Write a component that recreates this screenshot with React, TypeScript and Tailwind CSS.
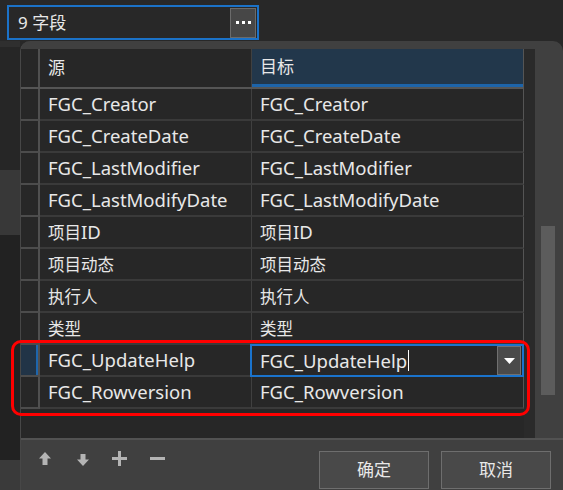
import React from 'react';

const rows = [
  'FGC_Creator',
  'FGC_CreateDate',
  'FGC_LastModifier',
  'FGC_LastModifyDate',
  '项目ID',
  '项目动态',
  '执行人',
  '类型',
  'FGC_UpdateHelp',
  'FGC_Rowversion',
];

function T({ s }: { s: string }) {
  const parts = s.split(/([\u3000-\u9fff]+)/).filter((p) => p.length > 0);
  return (
    <span className="whitespace-nowrap">
      {parts.map((p, i) =>
        /[\u3000-\u9fff]/.test(p) ? (
          <span key={i} className="text-[16.5px]">
            {p}
          </span>
        ) : (
          <span key={i}>{p}</span>
        )
      )}
    </span>
  );
}

function UpIcon() {
  return (
    <svg width="12" height="13" viewBox="0 0 12 13">
      <polygon points="6,0 12,6.5 8.5,6.5 8.5,13 3.5,13 3.5,6.5 0,6.5" fill="#b4b4b4" />
    </svg>
  );
}
function DownIcon() {
  return (
    <svg width="12" height="12" viewBox="0 0 12 12">
      <polygon points="3.5,0 8.5,0 8.5,5.5 12,5.5 6,12 0,5.5 3.5,5.5" fill="#b4b4b4" />
    </svg>
  );
}
function PlusIcon() {
  return (
    <svg width="15" height="15" viewBox="0 0 15 15">
      <rect x="6" y="0" width="3" height="15" fill="#b4b4b4" />
      <rect x="0" y="6" width="15" height="3" fill="#b4b4b4" />
    </svg>
  );
}
function MinusIcon() {
  return (
    <svg width="15" height="15" viewBox="0 0 15 15">
      <rect x="0" y="6" width="15" height="3" fill="#b4b4b4" />
    </svg>
  );
}

export default function App() {
  return (
    <div className="w-[563px] h-[490px] bg-[#282828] overflow-hidden relative font-['Noto_Sans','Noto_Sans_CJK_SC',sans-serif] text-[#e8e8e8]">
      {/* top field */}
      <div className="h-[41px] pt-[5px] pl-[7px]">
        <div className="w-[252px] h-[35px] border-2 border-[#1b72c8] flex items-center pl-[9px] pr-[1px]">
          <span className="flex-1 text-[17px] leading-none">9 字段</span>
          <div className="w-[26px] h-[30px] bg-[#474747] border border-[#6b6b6b] flex items-center justify-center gap-[3px]">
            <span className="w-[3px] h-[3px] bg-white" />
            <span className="w-[3px] h-[3px] bg-white" />
            <span className="w-[3px] h-[3px] bg-white" />
          </div>
        </div>
      </div>

      <div className="flex h-[449px]">
        {/* background strip left of dialog */}
        <div className="w-[20px] flex flex-col">
          <div className="h-[6px] bg-[#2f2f2f]" />
          <div className="h-[123px] bg-[#262626]" />
          <div className="h-[65px] bg-[#383838]" />
          <div className="h-[225px] bg-[#222222]" />
          <div className="flex-1 bg-[#3a3a3a]" />
        </div>

        {/* dialog */}
        <div className="flex-1 bg-[#404040] rounded-t-[10px] border-l border-[#474747] flex flex-col pt-[8px]">
          <div className="h-[389px] flex">
            {/* grid */}
            <div className="w-[503px] bg-[#272727] flex flex-col text-[18.5px]">
              {/* header */}
              <div className="h-[40px] flex border-b-2 border-[#555555] text-[17px]">
                <div className="w-[19px] border-r-2 border-[#505050]" />
                <div className="w-[212px] border-r border-[#404040] flex items-center pl-[8px]">源</div>
                <div className="w-[272px] bg-[#22374b] border-r border-[#555555] flex flex-col">
                  <div className="flex-1 flex items-center pl-[8px]">目标</div>
                  <div className="h-[3px] bg-[#1d64a9]" />
                </div>
              </div>
              {rows.map((r, i) => {
                const active = i === 8;
                return (
                  <div key={r} className="h-[32px] flex">
                    <div
                      className={
                        active
                          ? 'w-[19px] border-r-2 border-b-2 border-r-[#505050] border-b-[#4c4c4c] bg-[#213447] flex justify-end'
                          : 'w-[19px] border-r-2 border-b-2 border-r-[#505050] border-b-[#4c4c4c]'
                      }
                    >
                      {active && <div className="w-[2px] bg-[#1e66ad]" />}
                    </div>
                    <div className="w-[212px] border-r border-b-2 border-r-[#404040] border-b-[#3a3a3a] flex items-center pl-[8px] overflow-hidden">
                      <T s={r} />
                    </div>
                    <div className="w-[272px] border-r border-b-2 border-r-[#555555] border-b-[#3a3a3a] flex items-center pl-[8px] relative">
                      {active ? (
                        <div className="absolute -top-[1px] -left-[2px] -right-[1px] -bottom-[2px] border-2 border-[#1a73cc] flex items-center pl-[8px] pr-[1px] bg-[#272727]">
                          <span className="flex-1 flex items-center">
                            <T s={r} />
                            <span className="w-[1px] h-[21px] bg-white ml-[1px]" />
                          </span>
                          <div className="w-[24px] h-[29px] bg-[#4a4a4a] border border-[#707070] flex items-center justify-center">
                            <svg width="11" height="6" viewBox="0 0 11 6">
                              <polygon points="0,0 11,0 5.5,6" fill="#ffffff" />
                            </svg>
                          </div>
                        </div>
                      ) : (
                        <T s={r} />
                      )}
                    </div>
                  </div>
                );
              })}
              <div className="flex-1" />
            </div>
            {/* dark strip */}
            <div className="w-[11px] bg-[#2a2a2a]" />
            {/* scrollbar */}
            <div className="flex-1 flex flex-col pl-[6px] pr-[8px]">
              <div className="h-[177px]" />
              <div className="h-[169px] bg-[#5c5c5c]" />
            </div>
          </div>

          {/* footer */}
          <div className="flex-1 border-t-2 border-[#525252] flex items-start">
            <div className="flex items-center h-[36px] pt-[1px] pl-[18px]">
              <div className="w-[12px] flex justify-center"><UpIcon /></div>
              <div className="w-[26px]" />
              <div className="w-[12px] flex justify-center pt-[2px]"><DownIcon /></div>
              <div className="w-[23px]" />
              <PlusIcon />
              <div className="w-[23px]" />
              <MinusIcon />
            </div>
            <div className="flex-1" />
            <div className="flex gap-[12px] pt-[11px] pr-[12px]">
              <div className="w-[110px] h-[38px] bg-[#494949] border border-[#6e6e6e] flex items-center justify-center text-[17px]">确定</div>
              <div className="w-[110px] h-[38px] bg-[#494949] border border-[#6e6e6e] flex items-center justify-center text-[17px]">取消</div>
            </div>
          </div>
        </div>
      </div>

      {/* red annotation */}
      <div className="absolute left-[11px] top-[340px] w-[519px] h-[76px] border-[3px] border-[#ff0000] rounded-[10px]" />
    </div>
  );
}
